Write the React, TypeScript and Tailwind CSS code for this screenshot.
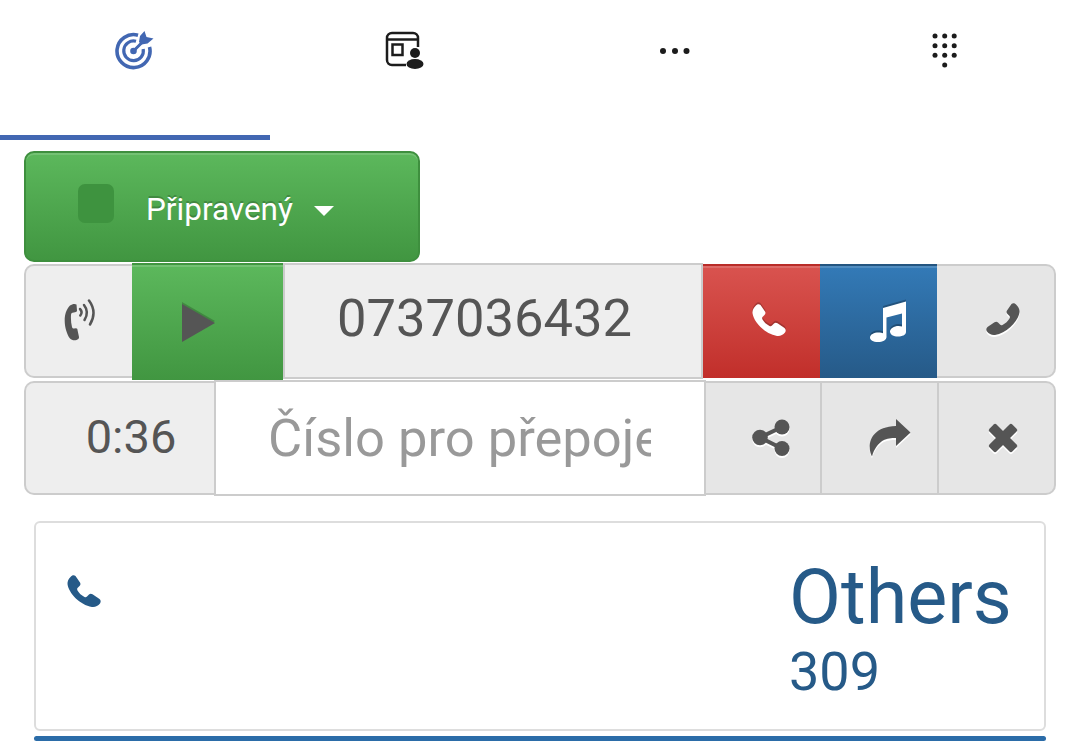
import React from "react";

const PHONE =
  "M3.500 4C5 2 7 1.500 8.500 3L13 9.500C13.800 11 13.500 12 12.500 13L10.500 15C10 15.500 10 16.500 10.500 17.500C12.500 20.500 14 22 17.500 24C18.500 24.500 19.300 24.300 20 23.600L22 21.500C23 20.500 24 20.400 25.500 21.200L32.500 26C34 27.300 34 29 33 30.500C31 33 28 34.500 25 34C13 32 1.500 20 .5 11C.3 8.500 1.500 6 3.500 4z";

function Phone({ className, flip }: { className?: string; flip?: boolean }) {
  return (
    <svg viewBox="0 0 34 35" className={className} fill="currentColor">
      <path d={PHONE} transform={flip ? "translate(34 0) scale(-1 1)" : undefined} />
    </svg>
  );
}

function TargetIcon() {
  return (
    <svg viewBox="0 0 40 40" className="w-[40px] h-[40px]" fill="none" stroke="#4267b2">
      <path d="M23 5.200A16.500 16.500 0 1 0 34.500 17" strokeWidth="3.600" />
      <path d="M21 11.300A9.800 9.800 0 1 0 28.200 19" strokeWidth="3.200" />
      <circle cx="18.500" cy="21" r="3.300" fill="#4267b2" stroke="none" />
      <path d="M18.500 21L27 12.500" strokeWidth="3" strokeLinecap="round" />
      <path d="M24 12L25 6L29.500 1L31.500 7L38.500 8.500L32.500 13.500L26.500 14.500z" fill="#4267b2" stroke="none" />
    </svg>
  );
}

function CalendarPerson() {
  return (
    <svg viewBox="0 0 40 40" className="w-[40px] h-[40px]" fill="none">
      <path d="M21 35H7A5 5 0 0 1 2 30V8A5 5 0 0 1 7 3H28A5 5 0 0 1 33 8V17" stroke="#1c1c1c" strokeWidth="2.500" />
      <path d="M2 9.500H33" stroke="#1c1c1c" strokeWidth="2.500" />
      <rect x="7.500" y="14.500" width="10" height="10.500" stroke="#1c1c1c" strokeWidth="2.500" />
      <circle cx="30" cy="23" r="5" fill="#1c1c1c" />
      <ellipse cx="30" cy="34" rx="8.500" ry="5" fill="#1c1c1c" />
    </svg>
  );
}

function Dots() {
  return (
    <svg viewBox="0 0 32 8" className="w-[32px] h-[8px]" fill="#1c1c1c">
      <circle cx="4" cy="4" r="3" />
      <circle cx="16" cy="4" r="3" />
      <circle cx="27.500" cy="4" r="3" />
    </svg>
  );
}

function Dialpad() {
  const pts: [number, number][] = [];
  for (const y of [3, 12.7, 22.3]) for (const x of [3, 12.7, 22.2]) pts.push([x, y]);
  pts.push([12.7, 32]);
  return (
    <svg viewBox="0 0 26 35" className="w-[26px] h-[35px]" fill="#1c1c1c">
      {pts.map(([x, y]) => (
        <circle key={`${x}-${y}`} cx={x} cy={y} r="2.500" />
      ))}
    </svg>
  );
}

function PhoneRinging() {
  return (
    <svg viewBox="0 0 36 42" className="w-[36px] h-[42px]" fill="none">
      <path
        d="M8 6.500C10 5 13 4.500 14.500 5.500L15 11.500C15 12.500 14 13 13 13.200L10.500 13.800C9.500 14 9 15 9 16C8.800 20 9 24 10 28C10.300 29 11 29.500 12 29.500L14 29.300C15 29.300 15.500 30 15.500 31L17 38C17.200 39.500 16 40.500 14.500 41C12 41.800 9.500 41 8 39.500C2.500 32 -.5 15 8 6.500z"
        fill="#555"
      />
      <path d="M18 10Q21 13 18.300 16.500" stroke="#555" strokeWidth="2.500" strokeLinecap="round" />
      <path d="M22 6Q27.500 13 22.500 21" stroke="#555" strokeWidth="2.500" strokeLinecap="round" />
      <path d="M27 1.500Q35.500 13 28 25.500" stroke="#555" strokeWidth="2.500" strokeLinecap="round" />
    </svg>
  );
}

function Music() {
  return (
    <svg viewBox="0 0 38 42" className="w-[38px] h-[42px] [filter:drop-shadow(0_-2px_0_rgba(0,0,0,0.25))]" fill="#fff">
      <path d="M14 7L37 .5V31C37 34 33 35.500 29 35.500C24.500 35.500 21 33.500 21 30.500C21 27.500 25 25 29.500 25C31 25 32 25.200 33 25.600V12.500L17.500 16.500V36C17.500 39 13.500 41 9 41C4 41 1 39 1 36.500C1 33.500 5 31.500 9.500 31.500C11.500 31.500 13 31.800 14 32.300z" />
    </svg>
  );
}

function ShareNodes() {
  return (
    <svg viewBox="0 0 38 38" className="w-[38px] h-[38px] [filter:drop-shadow(0_2px_0_#fff)]" fill="#555" stroke="#555">
      <path d="M30 8L8 18.500L30 29.500" fill="none" strokeWidth="4" />
      <circle cx="8" cy="18.500" r="7.800" stroke="none" />
      <circle cx="30" cy="8" r="7.500" stroke="none" />
      <circle cx="30" cy="29.500" r="7.500" stroke="none" />
    </svg>
  );
}

function Forward() {
  return (
    <svg viewBox="0 0 43 38" className="w-[43px] h-[38px] [filter:drop-shadow(0_2px_0_#fff)]" fill="#555">
      <path d="M28 0L42.500 13.500L28 27V19C19 18.500 9 21 4 37.500C-.5 30 -1 8 28 7z" />
    </svg>
  );
}

function Cross() {
  return (
    <svg viewBox="0 0 30 30" className="w-[30px] h-[30px] [filter:drop-shadow(0_2px_0_#fff)]" fill="#555">
      <rect x="-1.200" y="10" width="32.400" height="10" rx="2" transform="rotate(45 15 15)" />
      <rect x="-1.200" y="10" width="32.400" height="10" rx="2" transform="rotate(-45 15 15)" />
    </svg>
  );
}

export default function App() {
  return (
    <div className="w-[1080px] h-[746px] overflow-hidden bg-white antialiased font-['Roboto',sans-serif]">
      <div className="flex h-[140px]">
        <div className="w-[270px] h-[140px] border-b-[5px] border-[#4267b2] flex justify-center pt-[30px]">
          <TargetIcon />
        </div>
        <div className="w-[270px] flex justify-center pt-[30px]">
          <CalendarPerson />
        </div>
        <div className="w-[270px] flex justify-center pt-[47px]">
          <Dots />
        </div>
        <div className="w-[270px] flex justify-center pt-[33px]">
          <Dialpad />
        </div>
      </div>

      <div className="pt-[11px] pl-[24px]">
        <div className="w-[396px] h-[111px] rounded-[10px] border-2 border-[#3e8f3e] bg-linear-to-b from-[#5cb85c] to-[#419641] shadow-[inset_0_2px_0_rgba(255,255,255,0.15)] flex items-start pl-[52px]">
          <div className="w-[36px] h-[39px] mt-[31px] rounded-[7px] bg-[#3e933f]" />
          <div className="ml-[32px] mt-[39px] text-[31.500px] leading-[36px] text-white [text-shadow:0_-2px_0_rgba(0,0,0,0.2)]">
            Připravený
          </div>
          <svg viewBox="0 0 20 10" className="ml-[21px] mt-[53px] w-[20px] h-[10px]" fill="#fff">
            <path d="M0 0H20L10 10z" />
          </svg>
        </div>
      </div>

      <div className="ml-[24px] w-[1032px] mt-[2px] h-[114px] flex">
        <div className="w-[108px] border-2 border-r-0 border-[#ccc] rounded-l-[10px] bg-[#eee] flex items-center justify-center pb-[2px] pl-[2px]">
          <PhoneRinging />
        </div>
        <div className="w-[151px] h-[117px] -mt-px border-t-2 border-[#419641] bg-linear-to-b from-[#5cb85c] to-[#419641] shadow-[inset_0_2px_0_rgba(255,255,255,0.15)] flex items-center justify-center pr-[19px]">
          <svg viewBox="0 0 33 38" className="w-[33px] h-[38px] [filter:drop-shadow(0_-2px_0_rgba(0,0,0,0.2))]" fill="#555">
            <path d="M0 0L33 19L0 38z" />
          </svg>
        </div>
        <div className="w-[420px] h-[116px] -mt-px border-2 border-[#ccc] bg-[#eee] flex items-center justify-center pb-[6px] pr-[17px] text-[52.500px] text-[#555]">
          0737036432
        </div>
        <div className="w-[117px] border-t-2 border-[#b92c28] bg-linear-to-b from-[#d9534f] to-[#c12e2a] shadow-[inset_0_2px_0_rgba(255,255,255,0.15)] flex items-center justify-center pb-[5px] pl-[14px]">
          <Phone className="w-[34px] h-[35px] text-white [filter:drop-shadow(0_-2px_0_rgba(0,0,0,0.2))]" />
        </div>
        <div className="w-[117px] border-t-2 border-[#245580] bg-linear-to-b from-[#337ab7] to-[#265a88] shadow-[inset_0_2px_0_rgba(255,255,255,0.15)] flex items-center justify-center pl-[18px]">
          <Music />
        </div>
        <div className="flex-1 border-2 border-l-0 border-[#ccc] rounded-r-[10px] bg-[#e6e6e6] flex items-center justify-center pb-[5px] pl-[14px]">
          <Phone flip className="w-[34px] h-[35px] text-[#555] [filter:drop-shadow(0_2px_0_#fff)]" />
        </div>
      </div>

      <div className="ml-[24px] w-[1032px] mt-[3px] h-[114px] flex">
        <div className="w-[190px] border-2 border-r-0 border-[#ccc] rounded-l-[10px] bg-[#eee] flex items-center justify-center text-[47px] text-[#555] pl-[22px] pb-[2px]">
          0:36
        </div>
        <input
          readOnly
          placeholder="Číslo pro přepojení"
          className="w-[492px] h-[116px] -mt-px border-2 border-[#ccc] bg-white pl-[52px] pr-[53px] text-[52.500px] text-[#555] outline-none placeholder:text-[#999]"
        />
        <div className="w-[116px] border-y-2 border-r-2 border-[#ccc] bg-[#e6e6e6] flex items-center justify-center pl-[16px]">
          <ShareNodes />
        </div>
        <div className="w-[117px] border-y-2 border-r-2 border-[#ccc] bg-[#e6e6e6] flex items-center justify-center pl-[20px]">
          <Forward />
        </div>
        <div className="flex-1 border-2 border-l-0 border-[#ccc] rounded-r-[10px] bg-[#e6e6e6] flex items-center justify-center pl-[12px]">
          <Cross />
        </div>
      </div>

      <div className="ml-[34px] w-[1012px] mt-[26px] h-[210px] border-2 border-[#ddd] rounded-[6px] flex justify-between pl-[31px] pr-[33px] text-[#265a88]">
        <Phone className="w-[34px] h-[35px] mt-[50px]" />
        <div className="w-[221px]">
          <div className="text-[75.500px] leading-[86px] mt-[31px] -ml-[1px]">Others</div>
          <div className="text-[54px] leading-[62px] -ml-[1px] mt-[1px]">309</div>
        </div>
      </div>
      <div className="ml-[34px] w-[1012px] mt-[5px] h-[5px] rounded-[3px] bg-[#2b6ca8]" />
    </div>
  );
}
